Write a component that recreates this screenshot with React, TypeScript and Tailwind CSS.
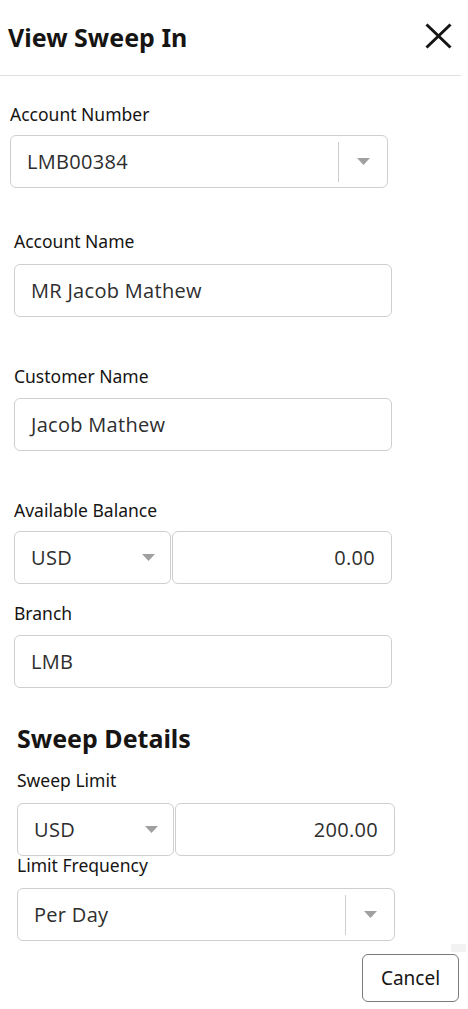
import type { ReactNode } from "react"

const labelFont = { fontFamily: '"Noto Sans", "Open Sans", sans-serif' }
const valueFont = { fontFamily: '"Open Sans", "Noto Sans", sans-serif' }

function Caret() {
  return (
    <svg width="13" height="7" viewBox="0 0 13 7" className="block">
      <path d="M0 0 L13 0 L6.5 7 Z" fill="#a0a0a0" />
    </svg>
  )
}

function Label({ children, className = "" }: { children: ReactNode; className?: string }) {
  return (
    <div className={`text-[17.5px] leading-[22px] text-[#161513] ${className}`} style={labelFont}>
      {children}
    </div>
  )
}

function Value({ children }: { children: ReactNode }) {
  return (
    <span className="text-[20px] tracking-[0.3px] text-[#2e2e2e]" style={valueFont}>
      {children}
    </span>
  )
}

function TextBox({ value }: { value: string }) {
  return (
    <div className="flex h-[53px] w-[378px] items-center rounded-[6px] border border-[#cfcfcf] bg-white px-4">
      <Value>{value}</Value>
    </div>
  )
}

function SelectBox({ value }: { value: string }) {
  return (
    <div className="flex h-[53px] w-[378px] items-center rounded-[6px] border border-[#cfcfcf] bg-white">
      <div className="w-[327px] pl-4">
        <Value>{value}</Value>
      </div>
      <div className="h-[40px] w-px bg-[#cfcfcf]" />
      <div className="flex flex-1 justify-center">
        <Caret />
      </div>
    </div>
  )
}

function AmountRow({ amount }: { amount: string }) {
  return (
    <div className="flex h-[53px] w-[378px] gap-px">
      <div className="flex w-[157px] items-center justify-between rounded-[6px] border border-[#cfcfcf] bg-white pl-4 pr-[15px]">
        <Value>USD</Value>
        <Caret />
      </div>
      <div className="flex flex-1 items-center justify-end rounded-[6px] border border-[#cfcfcf] bg-white pr-4">
        <Value>{amount}</Value>
      </div>
    </div>
  )
}

export default function App() {
  return (
    <div className="relative h-[1009px] w-[468px] overflow-hidden bg-white text-[#161513]">
      {/* header */}
      <div className="flex h-[76px] w-[461px] items-center justify-between border-b border-[#e0e0e0] pl-2 pr-[9px]">
        <h1 className="text-[25px] font-bold" style={labelFont}>
          View Sweep In
        </h1>
        <svg width="27" height="26" viewBox="0 0 27 26" className="-mt-[3px]">
          <path d="M1.5 1.5 L25.5 24.5 M25.5 1.5 L1.5 24.5" stroke="#161513" strokeWidth="3" />
        </svg>
      </div>

      <div className="pl-[10px] pt-[27px]">
        <Label>Account Number</Label>
        <div className="mt-[10px]">
          <SelectBox value="LMB00384" />
        </div>
      </div>

      <div className="pl-[14px] pt-[42px]">
        <Label>Account Name</Label>
        <div className="mt-[12px]">
          <TextBox value="MR Jacob Mathew" />
        </div>
      </div>

      <div className="pl-[14px] pt-[48px]">
        <Label>Customer Name</Label>
        <div className="mt-[11px]">
          <TextBox value="Jacob Mathew" />
        </div>
      </div>

      <div className="pl-[14px] pt-[48px]">
        <Label>Available Balance</Label>
        <div className="mt-[10px]">
          <AmountRow amount="0.00" />
        </div>
      </div>

      <div className="pl-[14px] pt-[18px]">
        <Label>Branch</Label>
        <div className="mt-[11px]">
          <TextBox value="LMB" />
        </div>
      </div>

      <div className="pl-[17px] pt-[34px]">
        <h2 className="text-[25px] font-bold leading-[32px]" style={labelFont}>
          Sweep Details
        </h2>
        <Label className="mt-[15px]">Sweep Limit</Label>
        <div className="mt-[12px]">
          <AmountRow amount="200.00" />
        </div>
        <Label className="-mt-[2px]">Limit Frequency</Label>
        <div className="mt-[12px]">
          <SelectBox value="Per Day" />
        </div>
      </div>

      <div className="absolute left-[451px] top-[944px] h-[8px] w-[15px] bg-[#f2f2f2]" />

      <div className="flex justify-end pr-[9px] pt-[13px]">
        <button
          className="h-[48px] w-[97px] rounded-[6px] border border-[#7a7a7a] bg-white text-[19px] text-[#161513]"
          style={labelFont}
        >
          Cancel
        </button>
      </div>
    </div>
  )
}
